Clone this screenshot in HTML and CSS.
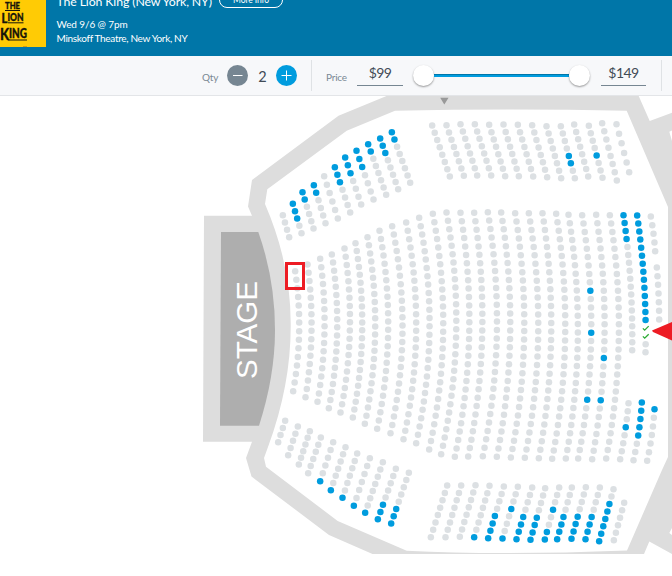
FILE: index.html
```html
<!DOCTYPE html>
<html lang="en">
<head>
<meta charset="utf-8">
<title>The Lion King (New York, NY)</title>
<link rel="stylesheet" href="styles.css">
</head>
<body>
<header class="event">
  <svg class="poster" viewBox="0 0 46 47" width="46" height="47">
    <rect width="46" height="47" fill="#ffcb05"/>
    <g fill="#17140a" stroke="#17140a" stroke-width=".35">
      <text x="5" y="9" font-size="9.5" textLength="15" lengthAdjust="spacingAndGlyphs">THE</text>
      <text x="1.5" y="22.500" font-size="14" textLength="22" lengthAdjust="spacingAndGlyphs">L<tspan font-size="10.5" dy="-1.500">ION</tspan></text>
      <text x="0" y="39.500" font-size="16.5" textLength="27" lengthAdjust="spacingAndGlyphs">K<tspan font-size="12.5" dy="-1.500">ING</tspan></text>
    </g>
    <path d="M5 10.5H20M8 22.8H23.5M8 40H27" stroke="#17140a" stroke-width="1"/>
    <path d="M23 46.5h4" stroke="#d99a08"/>
  </svg>
  <div class="details">
    <div class="title-row">
      <h1>The Lion King (New York, NY)</h1>
      <button class="more">More Info</button>
    </div>
    <p class="date">Wed 9/6 @ 7pm</p>
    <p class="venue">Minskoff Theatre, New York, NY</p>
  </div>
</header>

<section class="filters">
  <span class="label qty-label">Qty</span>
  <button class="round minus"><svg width="21" height="21"><path d="M6 10.5h9.500"/></svg></button>
  <span class="qty">2</span>
  <button class="round plus"><svg width="21" height="21"><path d="M5.500 10.500h10M10.500 5.500v10"/></svg></button>
  <i class="divider"></i>
  <span class="label price-label">Price</span>
  <span class="amount low">$99</span>
  <div class="slider"><i class="knob"></i><i class="track"></i><i class="knob"></i></div>
  <span class="amount high">$149</span>
  <i class="divider last"></i>
</section>

<main>
  <svg class="map" viewBox="0 96 672 480" width="672" height="480">
    <path fill="#ddd" d="M386.500 96L338.500 115.700L252 180L248 206.500L252 215.700H204L203 441.700H252L246 458L251.500 476.500L329 535L372.500 554H644L649.300 541.500L672 554V535L669.300 533L672 528V141L669.300 131.700L672 130.500V112.700L649.700 121L638.700 96Z"/>
    <path fill="#fff" d="M395 110.700L346.700 130.700L267.300 189.300L265 204Q291 264 290.700 325Q291 385 268 447L264 458L266 466.700L337.700 521L406.700 550.700Q500 555.500 627 550.500L662 470L668 457V207L626.700 110.700Q510 108.500 395 110.700Z"/>
    <path fill="#aeaeae" d="M221 232H258.300Q275 279 275 330Q275 376 259 425.700H220Z"/>
    <text class="stage" transform="translate(257 379) rotate(-90)" textLength="98" lengthAdjust="spacingAndGlyphs">STAGE</text>
    <path fill="#999" d="M440.200 97.700H448.500L444.300 104.500Z"/>
    <g id="seats"></g>
    <path fill="none" stroke="#ed1c24" stroke-width="3" d="M286.500 263.500H303.500V288.500H286.500Z"/>
    <path fill="#ed1c24" d="M652 330.500L672 322V340.500L653 332Z"/>
  </svg>
</main>
<script src="seats.js"></script>
</body>
</html>
```
FILE: styles.css
```css
* { box-sizing: border-box; }
body { margin: 0; background: #fff; font-family: Lato, "Open Sans", sans-serif; overflow: hidden; }
button { font-family: inherit; padding: 0; border: 0; }
h1, p { margin: 0; font-weight: 400; white-space: nowrap; }

.event { display: flex; height: 56px; overflow: hidden; background: #0076a8; color: #fff; }
.poster { display: block; flex: none; font-family: Lato, sans-serif; font-weight: 900; }
.details { margin: -8px 0 0 10.5px; }
.title-row { display: flex; height: 16px; }
h1 { width: 162.500px; font-size: 12.300px; line-height: 20px; letter-spacing: -.12px; }
.more { width: 64px; height: 16px; border: 1px solid #fff; border-radius: 8px; background: none; color: #fff; font-size: 8.500px; line-height: 15px; letter-spacing: -.1px; }
.date { margin-top: 9px; font-size: 10px; line-height: 14px; letter-spacing: -.1px; }
.venue { font-size: 10px; line-height: 14px; letter-spacing: -.32px; }

.filters { display: flex; align-items: center; height: 40px; padding-left: 202px; background: #f7f8fa; border-bottom: 1px solid #e3e5e8; color: #414b56; }
.label { flex: none; color: #7a8894; font-size: 10px; line-height: 14px; padding-top: 2px; letter-spacing: -.2px; }
.qty-label { width: 25px; }
.price-label { width: 31px; margin-left: 14px; }
.round { flex: none; width: 21px; height: 21px; border-radius: 50%; }
.round svg { display: block; fill: none; stroke: #fff; stroke-width: 1; }
.minus { background: #768692; }
.plus { background: #009cde; }
.qty { flex: none; width: 28px; padding: 1px 0 0 1px; text-align: center; font-size: 14.500px; }
.divider { flex: none; width: 1px; height: 31px; margin-left: 14px; background: #dfe2e5; }
.amount { flex: none; height: 20px; border-bottom: 1px solid #768692; font-size: 14px; line-height: 13px; text-align: center; letter-spacing: -.55px; }
.low { width: 46px; }
.high { width: 45px; margin-left: 11px; }
.slider { flex: none; display: flex; align-items: center; width: 177px; margin-left: 10px; }
.knob { flex: none; width: 21px; height: 21px; border-radius: 50%; background: #fff; box-shadow: 0 1px 2px rgba(0,0,0,.4); }
.track { flex: 1; height: 3px; background: #009cde; border-top: 1px solid #0076a8; }
.last { margin-left: 15px; }

.map { display: block; }
.stage { fill: #fff; font-family: "Liberation Sans", sans-serif; font-size: 29.500px; }
.seat { fill: #dce0e3; }
.open { fill: #009cde; }
.picked { fill: none; stroke: #2bab33; stroke-width: 1.3; }
```
FILE: seats.js
```js
// Each section has an origin; line coordinates are in thirds of a pixel.
// Line: [x top, y top, x middle (null = straight), x bottom, y bottom, seats, open seats, picked seats]
const sections = [
  { x: 200, y: 90, lines: [
    [248,375,null,267,441,4], [278,341,null,304,429,5,[0,1,2]], [307,306,null,340,415,6,[0,1]],
    [341,285,null,376,399,6,[0,1]], [372,258,null,413,385,6], [404,231,null,450,367,7,[0,1,2]],
    [435,202,null,483,343,7,[0,1,2]], [469,182,null,520,328,7,[0,1,2]], [504,162,null,558,314,8,[0,1]],
    [540,145,null,594,297,8,[0,1,2]], [575,126,null,630,278,8,[0,1]]
  ]},
  { x: 410, y: 90, lines: [
    [66,106,null,119,259,8], [109,105,null,161,257,8], [151,102,null,201,256,8], [194,102,null,243,256,8],
    [237,104,null,285,258,8], [280,103,null,326,258,8], [323,104,null,369,259,8], [366,105,null,411,261,8],
    [409,108,null,453,264,8], [452,108,null,494,264,8,[4,5]], [492,103,null,534,259,8],
    [536,107,null,577,263,8,[4]], [576,99,null,620,271,8], [619,102,null,657,246,6]
  ]},
  { x: 240, y: 400, lines: [
    [135,62,null,114,126,4], [173,79,null,144,165,5], [209,93,null,176,193,6], [242,112,null,204,219,6],
    [279,126,null,240,243,6,[5]], [316,141,null,272,270,7,[6]], [351,160,null,307,293,7,[6]],
    [389,174,null,341,317,7,[6]], [428,186,null,375,338,8,[7]], [467,206,null,413,357,8,[5,6,7]],
    [506,218,null,453,370,8,[5,6,7]]
  ]},
  { x: 410, y: 460, lines: [
    [111,76,null,62,231,8], [153,76,null,106,231,8], [196,75,null,149,230,8], [238,77,null,192,231,8,[7]],
    [281,79,null,234,234,8,[4,5,6,7]], [323,80,null,277,235,8,[3,7]], [366,82,null,319,237,8,[4,5,6,7]],
    [405,84,null,361,239,8,[4,5,6,7]], [447,82,null,404,238,8,[3,6,7]], [485,82,null,441,237,8,[4,5,6,7]],
    [527,81,null,484,236,8,[4,5,6,7]], [569,82,null,526,237,8,[4,5,6,7]],
    [610,87,null,567,243,8,[2,3,4,5,6,7]], [642,128,null,611,240,6]
  ]},
  { x: 290, y: 200, lines: [
    [15,213,27,9,573,15], [52,193,64,46,591,17], [90,176,103,82,605,18], [125,163,141,116,624,20],
    [163,145,179,151,637,21], [196,129,216,188,652,23], [232,111,255,224,671,24], [268,92,294,261,686,25],
    [306,78,337,301,699,26], [348,67,378,340,717,27], [387,53,418,378,729,28], [428,41,459,417,748,29],
    [469,37,498,453,762,30]
  ]},
  { x: 440, y: 200, lines: [
    [61,38,87,44,770,30], [102,38,126,84,769,30], [143,36,170,128,768,30], [183,37,210,170,770,30],
    [225,39,252,212,772,30], [266,39,294,254,773,30], [307,39,333,296,774,30], [348,41,375,336,776,30],
    [385,44,413,377,775,30], [426,45,453,414,775,30,[9,14,22]], [468,44,493,456,777,30,[17,22]],
    [509,45,536,498,775,30],
    [550,45,571,576,450,18,[0,1,2,3]], [565,609,555,540,777,8,[3]],
    [591,46,612,616,456,18,[0,1,2,3,4,5,6,7,8,9,10,11,12,13],[14,15]], [605,607,596,580,780,8,[0,1,2,3,4]],
    [632,49,640,645,153,5], [650,202,655,657,358,7], [643,627,635,621,782,7,[0]]
  ]}
];

const group = document.getElementById("seats");
function add(tag, attributes) {
  const node = document.createElementNS("http://www.w3.org/2000/svg", tag);
  for (const key in attributes) node.setAttribute(key, attributes[key]);
  group.appendChild(node);
}

for (const section of sections) {
  for (const [x0, y0, middle, x1, y1, count, open = [], picked = []] of section.lines) {
    const bow = middle === null ? 0 : middle - (x0 + x1) / 2;
    for (let i = 0; i < count; i++) {
      const t = i / (count - 1);
      const x = section.x + (x0 + (x1 - x0) * t + bow * 4 * t * (1 - t)) / 3 + 0.17;
      const y = section.y + (y0 + (y1 - y0) * t) / 3 + 0.17;
      if (picked.includes(i)) {
        add("path", { class: "picked", d: `M${x - 2.8} ${y + 0.3}l1.800 1.800l4 -4` });
      } else {
        add("circle", { class: open.includes(i) ? "seat open" : "seat", cx: x, cy: y, r: 3.25 });
      }
    }
  }
}
```
